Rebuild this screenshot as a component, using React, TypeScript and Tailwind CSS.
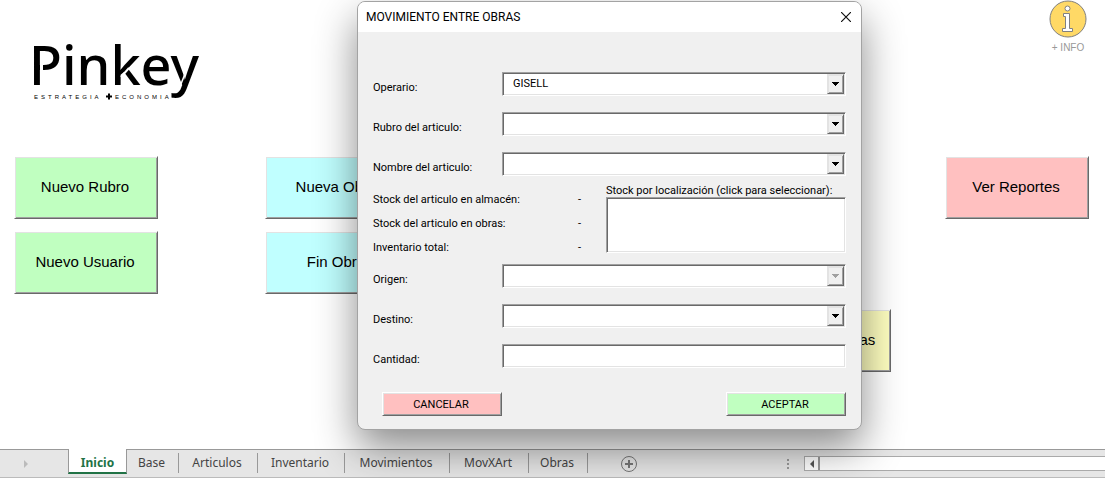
import { useState } from "react";
import type { ReactNode } from "react";
import { clsx } from "clsx";

const raised =
  "border border-b-[#696969] border-r-[#696969] shadow-[inset_1px_1px_0_#e3e3e3,inset_-1px_-1px_0_#a0a0a0]";
const sunken =
  "border border-t-[#a0a0a0] border-l-[#a0a0a0] border-b-white border-r-white shadow-[inset_1px_1px_0_#696969,inset_-1px_-1px_0_#e3e3e3]";

function Logo() {
  return (
    <svg
      role="img"
      aria-label="Pinkey, estrategia + economia"
      viewBox="0 0 180 84"
      className="mt-7 ml-[30px] h-[84px] w-[180px]"
    >
      <text
        x="-1"
        y="57"
        fontSize="54"
        fill="#000"
        className="font-['Noto_Sans',sans-serif] font-medium"
      >
        Pinkey
      </text>
      <g stroke="#fff" fill="none">
        <path d="M11.500 36V50" strokeWidth="3" />
        <path d="M91 49L99 40" strokeWidth="2" />
        <path d="M158 38L151 56" strokeWidth="1.500" />
      </g>
      <text
        x="4"
        y="71"
        fontSize="6"
        fill="#000"
        className="font-['Liberation_Sans',sans-serif] tracking-[3px]"
      >
        ESTRATEGIA
      </text>
      <path d="M76 68.500h6M79 65.500v6" stroke="#000" strokeWidth="2" />
      <text
        x="85"
        y="71"
        fontSize="6"
        fill="#000"
        className="font-['Liberation_Sans',sans-serif] tracking-[3px]"
      >
        ECONOMIA
      </text>
    </svg>
  );
}

function SheetButton({ color, children }: { color: string; children: ReactNode }) {
  return (
    <button
      type="button"
      className={clsx(
        raised,
        "h-[63px] w-36 border-t-white border-l-white pr-0.5 text-[15px] whitespace-nowrap text-black",
        color,
      )}
    >
      {children}
    </button>
  );
}

function Field({ id, label, children }: { id: string; label: string; children: ReactNode }) {
  return (
    <div className="flex h-6 items-end">
      <label htmlFor={id} className="w-[129px] shrink-0 leading-4">
        {label}
      </label>
      {children}
    </div>
  );
}

function Combo({
  id,
  label,
  value = "",
  disabled = false,
}: {
  id: string;
  label: string;
  value?: string;
  disabled?: boolean;
}) {
  return (
    <Field id={id} label={label}>
      <div className={clsx(sunken, "relative h-6 flex-1 bg-white p-px")}>
        <select
          id={id}
          disabled={disabled}
          defaultValue={value}
          className="block h-5 w-full appearance-none pr-5 pl-[9px] text-black outline-none"
        >
          <option value={value}>{value}</option>
        </select>
        <span
          aria-hidden="true"
          className={clsx(
            raised,
            "pointer-events-none absolute top-px right-px flex h-5 w-[17px] items-center justify-center border-t-[#e3e3e3] border-l-[#e3e3e3] bg-[#f0f0f0]",
          )}
        >
          <svg width="7" height="4" viewBox="0 0 7 4" shapeRendering="crispEdges">
            <path d="M0 0h7v1h-1v1h-1v1h-1v1h-1v-1h-1v-1h-1v-1h-1z" fill={disabled ? "#a0a0a0" : "#000"} />
          </svg>
        </span>
      </div>
    </Field>
  );
}

function MovementDialog() {
  const stock = ["Stock del articulo en almacén:", "Stock del articulo en obras:", "Inventario total:"];
  return (
    <section
      role="dialog"
      aria-labelledby="dialog-title"
      className="w-full max-w-[505px] overflow-hidden rounded-lg border border-[#a3a3a3] bg-[#f0f0f0] font-[Roboto,sans-serif] text-[11px] text-black shadow-[0_18px_42px_rgba(0,0,0,0.46)]"
    >
      <header className="flex h-[30px] items-center justify-between bg-white pr-2.5 pl-2">
        <h1 id="dialog-title" className="text-xs">
          MOVIMIENTO ENTRE OBRAS
        </h1>
        <button type="button" aria-label="Cerrar">
          <svg width="10" height="10" viewBox="0 0 10 10" stroke="#111" strokeWidth="1.200">
            <path d="M0 0L10 10M10 0L0 10" />
          </svg>
        </button>
      </header>
      <form className="px-[15px] pt-10 pb-[13px]" onSubmit={(e) => e.preventDefault()}>
        <div className="flex flex-col gap-4">
          <Combo id="operario" label="Operario:" value="GISELL" />
          <Combo id="rubro" label="Rubro del articulo:" />
          <Combo id="nombre" label="Nombre del articulo:" />
        </div>
        <div className="mt-2 mb-1 flex justify-between">
          <dl className="w-[208px] pt-1 leading-6">
            {stock.map((name) => (
              <div key={name} className="flex justify-between">
                <dt>{name}</dt>
                <dd>-</dd>
              </div>
            ))}
          </dl>
          <div className="w-[240px]">
            <label htmlFor="localizacion" className="block leading-[13px] whitespace-nowrap">
              Stock por localización (click para seleccionar):
            </label>
            <select
              id="localizacion"
              size={3}
              className={clsx(sunken, "block h-14 w-full appearance-none bg-white outline-none")}
            />
          </div>
        </div>
        <div className="flex flex-col gap-4">
          <Combo id="origen" label="Origen:" disabled />
          <Combo id="destino" label="Destino:" />
          <Field id="cantidad" label="Cantidad:">
            <input id="cantidad" type="text" className={clsx(sunken, "h-6 min-w-0 flex-1 bg-white px-2 outline-none")} />
          </Field>
        </div>
        <div className="mt-6 flex justify-between pl-[9px]">
          <button type="button" className={clsx(raised, "h-6 w-[120px] border-t-white border-l-white bg-[#ffc0c0] pt-0.5 pr-0.5")}>
            CANCELAR
          </button>
          <button type="submit" className={clsx(raised, "h-6 w-[120px] border-t-white border-l-white bg-[#c0ffc0] pt-0.5 pr-0.5")}>
            ACEPTAR
          </button>
        </div>
      </form>
    </section>
  );
}

const tabs = [
  { name: "Base", width: "w-[52px]" },
  { name: "Articulos", width: "w-[79px]" },
  { name: "Inventario", width: "w-[87px]" },
  { name: "Movimientos", width: "w-[105px]" },
  { name: "MovXArt", width: "w-[79px]" },
  { name: "Obras", width: "w-[59px]" },
];

function SheetTabs() {
  const [active, setActive] = useState("Inicio");
  return (
    <footer className="flex h-[29px] border-t border-b border-t-[#999] border-b-[#bbb] bg-[#e6e6e6] font-['Noto_Sans',sans-serif] text-xs text-[#444]">
      <div className="flex w-[68px] shrink-0 items-center pl-6">
        <svg width="4" height="8" viewBox="0 0 4 8" fill="#bbb">
          <path d="M0 0L4 4L0 8z" />
        </svg>
      </div>
      <nav className="flex shrink-0">
        <button
          type="button"
          onClick={() => setActive("Inicio")}
          aria-current={active === "Inicio"}
          className="-mt-px h-[25px] w-[59px] border-r border-b-2 border-l border-r-[#999] border-b-[#217346] border-l-[#999] bg-white pt-1 font-bold text-[#217346]"
        >
          Inicio
        </button>
        {tabs.map((tab) => (
          <button
            key={tab.name}
            type="button"
            onClick={() => setActive(tab.name)}
            className={clsx("mt-[3px] h-5 border-r border-[#999] pr-0.5", tab.width)}
          >
            {tab.name}
          </button>
        ))}
      </nav>
      <button type="button" aria-label="Hoja nueva" className="ml-8 shrink-0">
        <svg width="18" height="18" viewBox="0 0 18 18" fill="none" stroke="#777">
          <circle cx="9" cy="9" r="7.500" />
          <path d="M5 9h8M9 5v8" strokeWidth="2" />
        </svg>
      </button>
      <div className="ml-auto flex w-[318px] items-center">
        <svg width="2" height="10" viewBox="0 0 2 10" fill="#999" className="mr-[15px]">
          <path d="M0 0h2v2h-2zM0 4h2v2h-2zM0 8h2v2h-2z" />
        </svg>
        <div className="flex h-[15px] flex-1 border border-r-0 border-[#aaa] bg-white">
          <button
            type="button"
            aria-label="Desplazar a la izquierda"
            className="flex w-[15px] items-center justify-center border-r-2 border-[#999]"
          >
            <svg width="4" height="8" viewBox="0 0 4 8" fill="#555">
              <path d="M4 0L0 4L4 8z" />
            </svg>
          </button>
        </div>
      </div>
    </footer>
  );
}

export default function App() {
  return (
    <div className="relative flex min-h-screen flex-col bg-white font-['Liberation_Sans',sans-serif]">
      <main className="flex-1">
        <div className="flex h-[156px] items-start justify-between">
          <Logo />
          <a href="#info" className="mr-[18px] flex flex-col items-center text-[10px] leading-3 text-[#999]">
            <svg width="38" height="38" viewBox="0 0 38 38" fill="#fff" stroke="#808080">
              <circle cx="19" cy="19" r="18" fill="#ffd966" />
              <circle cx="18.500" cy="8.500" r="2.500" />
              <path d="M14.500 15v-1.500h6v15h3v3h-10v-3h3v-12h-2z" />
            </svg>
            <span className="mt-1">+ INFO</span>
          </a>
        </div>
        <div className="flex justify-between pr-4 pl-[14px]">
          <div className="flex gap-[107px]">
            <div className="flex flex-col gap-3">
              <SheetButton color="bg-[#c0ffc0]">Nuevo Rubro</SheetButton>
              <SheetButton color="bg-[#c0ffc0]">Nuevo Usuario</SheetButton>
            </div>
            <div className="flex flex-col gap-3">
              <SheetButton color="bg-[#c0ffff]">Nueva Obra</SheetButton>
              <SheetButton color="bg-[#c0ffff]">Fin Obra</SheetButton>
            </div>
          </div>
          <div className="flex gap-[54px]">
            <div className="pt-[153px]">
              <SheetButton color="bg-[#ffffc0]">Mov. entre Obras</SheetButton>
            </div>
            <SheetButton color="bg-[#ffc0c0]">Ver Reportes</SheetButton>
          </div>
        </div>
      </main>
      <SheetTabs />
      <div className="pointer-events-none absolute inset-0 flex items-start justify-center overflow-hidden pt-px pl-[114px]">
        <div className="pointer-events-auto flex w-full justify-center">
          <MovementDialog />
        </div>
      </div>
    </div>
  );
}
